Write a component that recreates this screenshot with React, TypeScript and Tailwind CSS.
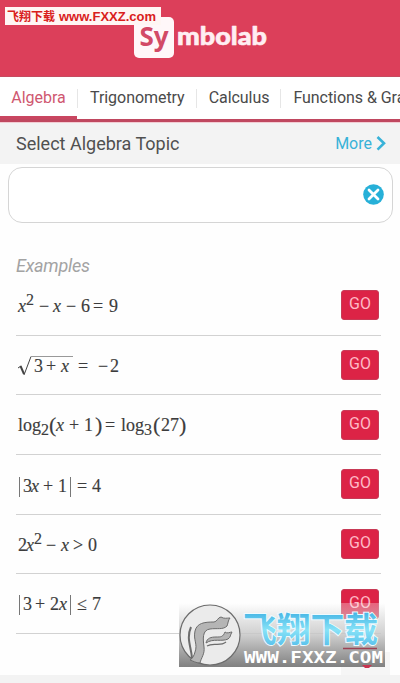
import type { ReactNode } from 'react'

type Token = { text: string; width: number; kind?: 'var' | 'sup' | 'sub' | 'big' | 'bar' | 'root' }

const tabs = ['Algebra', 'Trigonometry', 'Calculus', 'Functions & Graphing']

const examples: Token[][] = [
  [
    { text: 'x', width: 8, kind: 'var' },
    { text: '2', width: 13, kind: 'sup' },
    { text: '−', width: 14 },
    { text: 'x', width: 13, kind: 'var' },
    { text: '−', width: 15 },
    { text: '6', width: 12 },
    { text: '=', width: 16 },
    { text: '9', width: 9 },
  ],
  [
    { text: '√', width: 16, kind: 'root' },
    { text: '3', width: 12 },
    { text: '+', width: 15 },
    { text: 'x', width: 17, kind: 'var' },
    { text: '=', width: 20 },
    { text: '−', width: 12 },
    { text: '2', width: 9 },
  ],
  [
    { text: 'log', width: 23 },
    { text: '2', width: 8, kind: 'sub' },
    { text: '(', width: 7, kind: 'big' },
    { text: 'x', width: 13, kind: 'var' },
    { text: '+', width: 15 },
    { text: '1', width: 11 },
    { text: ')', width: 10, kind: 'big' },
    { text: '=', width: 16 },
    { text: 'log', width: 23 },
    { text: '3', width: 9, kind: 'sub' },
    { text: '(', width: 8, kind: 'big' },
    { text: '27', width: 18 },
    { text: ')', width: 7, kind: 'big' },
  ],
  [
    { text: '|', width: 4, kind: 'bar' },
    { text: '3', width: 8 },
    { text: 'x', width: 12, kind: 'var' },
    { text: '+', width: 15 },
    { text: '1', width: 11 },
    { text: '|', width: 7, kind: 'bar' },
    { text: '=', width: 15 },
    { text: '4', width: 9 },
  ],
  [
    { text: '2', width: 8 },
    { text: 'x', width: 8, kind: 'var' },
    { text: '2', width: 12, kind: 'sup' },
    { text: '−', width: 15 },
    { text: 'x', width: 12, kind: 'var' },
    { text: '>', width: 15 },
    { text: '0', width: 9 },
  ],
  [
    { text: '|', width: 4, kind: 'bar' },
    { text: '3', width: 12 },
    { text: '+', width: 15 },
    { text: '2', width: 9 },
    { text: 'x', width: 10, kind: 'var' },
    { text: '|', width: 7, kind: 'bar' },
    { text: '≤', width: 15 },
    { text: '7', width: 9 },
  ],
]

const kinds = {
  var: 'italic',
  sup: 'text-[16px] -translate-y-[6px]',
  sub: 'text-[16px] translate-y-[5px]',
  big: 'text-[22px]',
  bar: 'text-transparent border-l border-[#777] h-[20px] mt-px ml-px [-webkit-text-stroke:0]',
  root: 'text-transparent [-webkit-text-stroke:0]',
}

function Formula({ tokens, lowered }: { tokens: Token[]; lowered: boolean }) {
  return (
    <div
      className={`relative flex h-6 items-center pl-[2px] font-['Liberation_Serif','DejaVu_Serif',serif] text-[18px] leading-6 text-[#3c3c3c] [-webkit-text-stroke:0.15px_#3c3c3c] ${lowered ? 'mt-[4px]' : 'mt-[1px]'}`}
    >
      {tokens.map((token, i) => (
        <span
          key={i}
          className={`block shrink-0 whitespace-nowrap ${token.kind ? kinds[token.kind] : ''}`}
          style={{ width: token.width }}
        >
          {token.text}
        </span>
      ))}
      {tokens[0].kind === 'root' && (
        <svg className="absolute left-0 top-0" width="58" height="24" fill="none" stroke="#444">
          <path d="M2 14l3-2" strokeWidth="1" />
          <path d="M4.500 12l3.500 8" strokeWidth="2" />
          <path d="M8 21l7-18.500" strokeWidth="1" />
          <path d="M15 2.500h42" stroke="#999" strokeWidth="1" />
        </svg>
      )}
    </div>
  )
}

function Row({ children }: { children: ReactNode }) {
  return (
    <li className="flex h-[59.7px] items-center justify-between border-b border-[#d2d2d2] pr-[2px]">
      {children}
      <button className="flex h-[30px] w-[38px] items-start justify-center rounded-[3px] border border-[#c83a56] bg-[#dc2346] pt-[3px] text-[16px] leading-[19px] text-[#ffb9c5]">
        GO
      </button>
    </li>
  )
}

function Watermark() {
  return (
    <div className="absolute left-[179px] top-[603px] flex h-[64px] w-[206px] bg-linear-to-b from-white/30 via-[#c6c6c6]/85 to-[#808080]">
      <svg width="62" height="64" viewBox="0 0 62 64" fill="none" stroke="#6c6c6c">
        <circle cx="31" cy="32" r="30" fill="#ebebeb" strokeWidth="1.2" />
        <path
          d="M51 15c-3 0-6 1-9-1-3 0-4 5-7 5-10 0-17 1-19 9-2 9 3 13 0 21-1 4-3 7-5 8 3 1 6 3 10 3 1-5 5-9 4-16-1-8-2-17 6-18 7-1 13 1 17-3 1-2 1-6 3-8z"
          fill="#b5b5b5"
        />
        <path d="M27 40c1-5 5-6 10-6 5 0 7 0 9-5 2 2 5 0 7 0-2 3-1 5-4 7-6 3-15-1-22 4z" fill="#b5b5b5" />
        <path d="M28 43c6-4 13 1 19-4" strokeWidth="1.2" />
        <path d="M12 24c-5 11 0 19 1 31" strokeWidth="2" />
      </svg>
      <svg width="144" height="64" viewBox="0 0 144 64">
        <defs>
          <linearGradient id="ice" x1="0" y1="0" x2="0" y2="1">
            <stop offset="0.2" stopColor="#48b7e6" />
            <stop offset="0.55" stopColor="#87e2f7" />
            <stop offset="1" stopColor="#49b5e8" />
          </linearGradient>
        </defs>
        <text
          x="2"
          y="39"
          fill="url(#ice)"
          stroke="#eefbff"
          strokeWidth="2"
          textLength="135"
          lengthAdjust="spacingAndGlyphs"
          className="font-['Noto_Sans_CJK_SC',sans-serif] text-[34px] font-bold [paint-order:stroke]"
        >
          飞翔下载
        </text>
        <text
          x="3"
          y="60"
          textLength="139"
          lengthAdjust="spacingAndGlyphs"
          className="fill-white font-['DejaVu_Sans_Mono',monospace] text-[15px] font-bold"
        >
          WWW.FXXZ.COM
        </text>
      </svg>
    </div>
  )
}

export default function App() {
  return (
    <div className="relative flex h-[683px] w-[400px] flex-col overflow-hidden bg-[#fefefe] font-[Roboto,sans-serif]">
      <header className="flex h-[77px] shrink-0 justify-center border-b border-[#c64b60] bg-[#dc3f5a] pt-[17px]">
        <div className="flex h-[41px] items-center">
          <span className="mr-[2px] ml-px flex h-[41px] w-[40px] items-center justify-center rounded-[5px] bg-[#fff7f9] pb-[3px] pl-px font-['Noto_Sans',sans-serif] text-[26px] leading-none font-bold text-[#d24a66]">
            Sy
          </span>
          <svg width="92" height="41">
            <text
              x="1"
              y="28"
              textLength="90"
              lengthAdjust="spacingAndGlyphs"
              stroke="#ffeef2"
              strokeWidth="0.6"
              strokeLinejoin="round"
              className="fill-[#ffeef2] font-[Lato,sans-serif] text-[25px] font-black"
            >
              mbolab
            </text>
          </svg>
        </div>
      </header>
      <div className="absolute left-[5px] top-[7px] h-[18px] w-[156px] bg-[#fff6f4]">
        <svg width="156" height="18" className="font-['Liberation_Sans','Noto_Sans_CJK_SC',sans-serif] font-bold">
          <text x="2" y="14" textLength="48" lengthAdjust="spacingAndGlyphs" className="fill-[#d9201c] text-[12px]">飞翔下载</text>
          <text x="54" y="14" textLength="97" lengthAdjust="spacingAndGlyphs" className="fill-[#d9201c] text-[12px]">www.FXXZ.com</text>
        </svg>
      </div>

      <nav className="flex h-[42px] shrink-0 bg-white text-[16px] text-[#4a4a4a]">
        {tabs.map((tab, i) => (
          <div
            key={tab}
            className={
              i === 0
                ? 'flex w-[77px] shrink-0 justify-center border-b-[3px] border-[#c94660] pt-[9px] text-[#cf5770]'
                : 'flex shrink-0 pt-[9px] whitespace-nowrap'
            }
          >
            {i > 0 && <span className="mt-[3px] mr-3 h-[19px] w-px bg-[#e6e6e6]" />}
            <span className={i > 0 ? 'pr-[11px] tracking-[-0.05px]' : ''}>{tab}</span>
          </div>
        ))}
      </nav>
      <div className="h-[4px] shrink-0 border-b border-[#f3ccd3] bg-[#c04860]" />

      <div className="flex h-[41px] shrink-0 items-center justify-between bg-[#f3f3f3] pl-[16px] pr-[14px] text-[18px] text-[#505050]">
        <h1>Select Algebra Topic</h1>
        <button className="flex items-center gap-[4px] text-[16px] text-[#38b2d8]">
          More
          <svg width="10" height="16" fill="none" stroke="currentColor" strokeWidth="2.6">
            <path d="M1.5 1l6.500 6.300-6.500 6.300" />
          </svg>
        </button>
      </div>

      <div className="mt-[3px] mr-[7px] ml-[8px] flex h-[56px] shrink-0 items-center justify-end rounded-[14px] border border-[#d5d5d5] bg-white pr-[8px] pb-px">
        <svg width="21" height="21" viewBox="0 0 21 21">
          <circle cx="10.5" cy="10.5" r="10.3" fill="#27b0d8" />
          <path d="M6 6l9 9M15 6l-9 9" stroke="white" strokeWidth="2.8" strokeLinecap="round" />
        </svg>
      </div>

      <main className="px-[16px] pt-[31px] pr-[19px]">
        <h2 className="h-[22px] text-[18px] leading-6 tracking-[-0.25px] text-[#a3a3a3] italic">Examples</h2>
        <ul>
          {examples.map((tokens, i) => (
            <Row key={i}>
              <Formula tokens={tokens} lowered={i === 3} />
            </Row>
          ))}
        </ul>
      </main>
      <footer className="mt-auto h-[8px] shrink-0 bg-[#f3f3f3]" />
      <div className="absolute left-[341px] top-[652px] h-[23px] w-[49px] bg-[#f6f6f6]" />
      <Watermark />
      <svg className="absolute left-[342px] top-[647px]" width="36" height="22">
        <path d="M1 1.500h34" stroke="#9c4254" strokeWidth="1.500" />
        <path d="M20 18h10l-3 3h-4z" fill="#c93550" />
      </svg>
    </div>
  )
}
